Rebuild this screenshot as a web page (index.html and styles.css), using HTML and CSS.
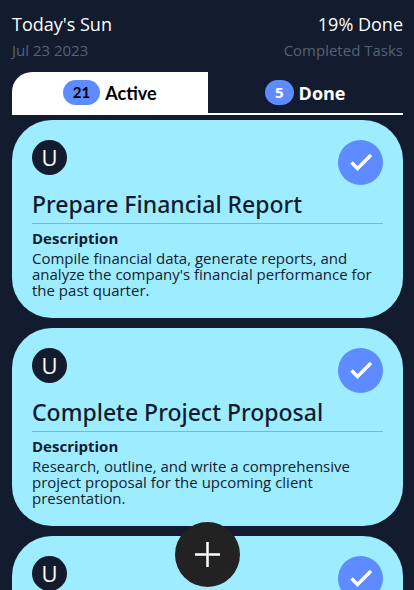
FILE: index.html
```html
<!DOCTYPE html>
<html lang="en">
<head>
<meta charset="utf-8">
<meta name="viewport" content="width=device-width, initial-scale=1">
<title>Tasks</title>
<link rel="stylesheet" href="styles.css">
</head>
<body>
<div class="app">
  <header class="summary">
    <div>
      <h1 class="summary-title">Today's Sun</h1>
      <p class="summary-note">Jul 23 2023</p>
    </div>
    <div class="summary-end">
      <p class="summary-title">19% Done</p>
      <p class="summary-note">Completed Tasks</p>
    </div>
  </header>
  <nav class="tabs">
    <button class="tab tab-active" type="button"><span class="count">21</span>Active</button>
    <button class="tab tab-done" type="button"><span class="count">5</span>Done</button>
  </nav>
  <main class="tasks">
    <article class="card">
      <div class="card-head">
        <span class="avatar">U</span>
        <button class="check" type="button" aria-label="Mark as done"><svg viewBox="0 0 45 45" width="45" height="45"><path d="M13.5 22.5l6 6L33 15"/></svg></button>
      </div>
      <h2 class="card-title">Prepare Financial Report</h2>
      <h3 class="card-label">Description</h3>
      <p class="card-text">Compile financial data, generate reports, and analyze the company's financial performance for the past quarter.</p>
    </article>
    <article class="card">
      <div class="card-head">
        <span class="avatar">U</span>
        <button class="check" type="button" aria-label="Mark as done"><svg viewBox="0 0 45 45" width="45" height="45"><path d="M13.5 22.5l6 6L33 15"/></svg></button>
      </div>
      <h2 class="card-title">Complete Project Proposal</h2>
      <h3 class="card-label">Description</h3>
      <p class="card-text">Research, outline, and write a comprehensive project proposal for the upcoming client presentation.</p>
    </article>
    <article class="card">
      <div class="card-head">
        <span class="avatar">U</span>
        <button class="check" type="button" aria-label="Mark as done"><svg viewBox="0 0 45 45" width="45" height="45"><path d="M13.5 22.5l6 6L33 15"/></svg></button>
      </div>
    </article>
  </main>
</div>
<button class="add" type="button" aria-label="Add task"><svg viewBox="0 0 25 25" width="25" height="25"><path class="edge" d="M12.5 0v25M0 12.5h25"/><path d="M12.5 0v25M0 12.5h25"/></svg></button>
</body>
</html>
```
FILE: styles.css
```css
* {
  box-sizing: border-box;
  margin: 0;
}

body {
  background: #121c2e;
  color: #121c2e;
  font-family: "Open Sans", "Noto Sans", sans-serif;
  font-size: 15px;
}

button {
  border: 0;
  padding: 0;
  font: inherit;
  cursor: pointer;
}

.app {
  display: flex;
  flex-direction: column;
  height: 100vh;
  padding: 11px 11px 0 12px;
}

.summary {
  display: flex;
  justify-content: space-between;
  height: 61px;
}

.summary-end {
  text-align: right;
}

.summary-title {
  color: #fff;
  font-size: 18px;
  font-weight: 400;
  line-height: 26px;
}

.summary-note {
  color: #556178;
  font-size: 15px;
  line-height: 26px;
}

.tabs {
  display: flex;
  flex: none;
  border-bottom: 2px solid #fff;
}

.tab {
  display: flex;
  flex: 1;
  align-items: center;
  justify-content: center;
  gap: 5px;
  height: 41px;
  font-size: 18px;
  font-weight: 700;
}

.tab-active {
  border-top-left-radius: 20px;
  background: #fff;
  color: #000;
  font-family: Lato, "Open Sans", sans-serif;
}

.tab-done {
  background: transparent;
  color: #fff;
}

.count {
  padding: 0 10px;
  border-radius: 13px;
  background: #5e8bff;
  font-size: 15px;
  line-height: 25px;
}

.tasks {
  display: flex;
  flex: 1;
  flex-direction: column;
  gap: 10px;
  min-height: 0;
  padding-top: 5px;
  overflow-y: auto;
  scrollbar-width: none;
}

.card {
  flex: none;
  min-height: 198px;
  padding: 20px;
  border-radius: 40px;
  background: #9eecff;
}

.card-head {
  display: flex;
  align-items: flex-start;
  justify-content: space-between;
}

.avatar {
  width: 35px;
  border-radius: 50%;
  background: #121c2e;
  color: #fff;
  font-size: 22px;
  line-height: 35px;
  text-align: center;
}

.check {
  width: 45px;
  height: 45px;
  border-radius: 50%;
  background: #5e8bff;
}

.check svg {
  display: block;
}

.check path {
  fill: none;
  stroke: #fff;
  stroke-width: 3.4;
}

.card-title {
  border-bottom: 1px solid #7bb8cc;
  font-family: "Noto Sans", "Open Sans", sans-serif;
  font-size: 23px;
  font-weight: 500;
  line-height: 38px;
}

.card-label {
  padding: 4px 0 2px;
  font-size: 15px;
  font-weight: 700;
  line-height: 20px;
}

.card-text {
  font-size: 15px;
  line-height: 16px;
}

.add {
  position: fixed;
  bottom: 3px;
  left: calc(50% - 32px);
  display: grid;
  place-items: center;
  width: 65px;
  height: 65px;
  border-radius: 50%;
  background: #222;
}

.add path {
  fill: none;
  stroke: #fff;
  stroke-width: 1;
}

.add .edge {
  stroke: #c8c8c8;
  stroke-width: 3;
}
```
